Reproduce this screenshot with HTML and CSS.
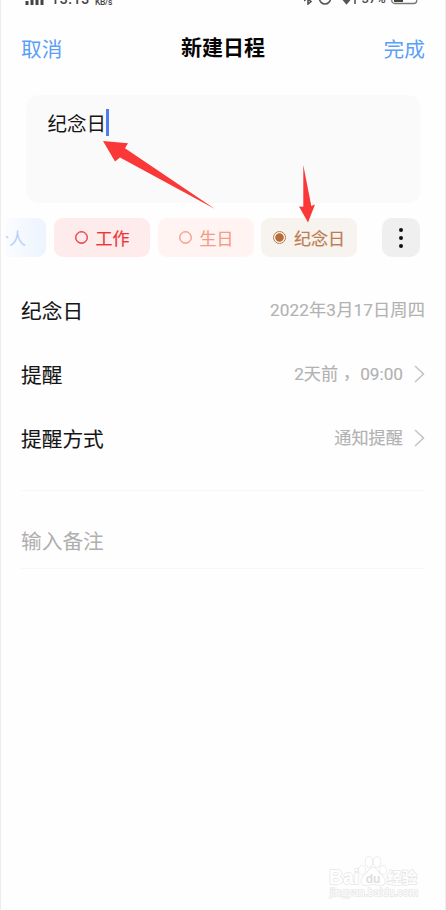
FILE: index.html
```html
<!DOCTYPE html>
<html lang="zh-CN">
<head>
<meta charset="utf-8">
<title>新建日程</title>
<link rel="stylesheet" href="styles.css">
</head>
<body>
<main class="screen">
  <div class="status">
    <div class="status-left">
      <svg class="signal" width="20" height="12" viewBox="0 0 20 12"><path d="M2 8v4M7 5v7M12 2v10M17 0v12" stroke="#444" stroke-width="3"/></svg>
      <span>13:13</span><span class="rate">KB/s</span>
    </div>
    <div class="status-right">
      <svg width="58" height="14" viewBox="0 0 58 14" fill="none" stroke="#555" stroke-width="1.6"><path d="M0 5l7 5.500L4 13V1l3 2.500L0 10"/><circle cx="21" cy="7.500" r="5.500"/><path d="M37 8q6-5 11 0"/><path d="M40 9.500l2.500 3 2.500-3z" fill="#555"/><path d="M51 4v9"/></svg>
      <span class="percent">37%</span>
      <svg class="battery" width="29" height="14" viewBox="0 0 29 14"><rect x=".75" y="1" width="25" height="11.5" rx="3" fill="none" stroke="#777" stroke-width="1.3"/><path d="M3 3h9v8H3z" fill="#444"/><path d="M28 5v4" stroke="#666"/></svg>
    </div>
  </div>
  <header class="header">
    <span class="action">取消</span>
    <h1>新建日程</h1>
    <span class="action">完成</span>
  </header>
  <section class="title-input"><span>纪念日</span><i class="caret"></i></section>
  <section class="categories">
    <div class="chips">
      <div class="chip personal">个人</div>
      <div class="chip work"><i class="ring"></i>工作</div>
      <div class="chip birthday"><i class="ring"></i>生日</div>
      <div class="chip anniversary"><i class="ring checked"></i>纪念日</div>
    </div>
    <div class="more"><i></i><i></i><i></i></div>
  </section>
  <section class="rows">
    <div class="row"><span>纪念日</span><span class="value date">2022年3月17日周四</span></div>
    <div class="row"><span>提醒</span><span class="value">2天前<span class="comma" lang="zh-TW">，</span>09:00<svg class="chevron" width="11" height="18" viewBox="0 0 11 18"><path d="M1 1l8.500 8L1 17"/></svg></span></div>
    <div class="row"><span>提醒方式</span><span class="value">通知提醒<svg class="chevron" width="11" height="18" viewBox="0 0 11 18"><path d="M1 1l8.500 8L1 17"/></svg></span></div>
  </section>
  <section class="note">输入备注</section>

  <svg class="arrows" width="446" height="240" viewBox="0 0 446 240"><path d="M103 141l25 2.300-3 5L215 209l-95-51.500-5 4z"/><path d="M303.300 165l8 41 3.700-1.500-7 18-9-16 4.300.3z"/></svg>
  <div class="watermark">
    <svg width="92" height="44" viewBox="0 0 92 44">
      <g class="outlined">
        <text class="bai" x="1" y="29" textLength="30" lengthAdjust="spacingAndGlyphs">Bai</text>
        <ellipse cx="34" cy="15" rx="3" ry="4"/><ellipse cx="41" cy="7" rx="3.500" ry="5"/><ellipse cx="49" cy="7" rx="3.500" ry="5"/><ellipse cx="55" cy="15" rx="3" ry="4"/>
        <path d="M45 13c-4 0-5 5-9 8-5 5-2 10 3 9 4-1 8-1 12 0 6 1 8-4 3-9-4-3-5-8-9-8z"/>
        <text class="cn" x="59" y="28">经验</text>
        <text class="domain" x="2" y="41" textLength="88" lengthAdjust="spacingAndGlyphs">jingyan.baidu.com</text>
      </g>
      <text class="du" x="45" y="28" text-anchor="middle">du</text>
    </svg>
  </div>
</main>
</body>
</html>
```
FILE: styles.css
```css
* { box-sizing: border-box; }
body { margin: 0; font-family: Roboto, "Noto Sans CJK SC", sans-serif; color: #151515; }
.screen { position: relative; width: 446px; height: 910px; overflow: hidden; background: #fefefe; border-left: 1px solid #ededed; border-right: 1px solid #ededed; }
.status { height: 16px; margin-top: -9px; padding: 0 26px 0 24px; display: flex; justify-content: space-between; font-size: 14px; line-height: 16px; color: #444; font-weight: 500; }
.status-left, .status-right { display: flex; align-items: flex-start; }
.signal { margin: 2px 6px 0 0; }
.status-left { letter-spacing: .7px; }
.rate { margin: 3px 0 0 5px; font-size: 8.500px; letter-spacing: -.4px; }
.status-right { margin-right: -1px; }
.status-right svg { flex: none; }
.percent { font-size: 12.500px; letter-spacing: .3px; margin: 0 5px 0 0; }
.header { height: 80px; padding: 0 20px; display: flex; align-items: center; justify-content: space-between; font-size: 20.7px; }
.action { color: #5c9ff8; padding-top: 1px; }
h1 { margin: -2px 0 0; font-size: 21px; font-weight: 700; color: #060606; }
.title-input { width: 395px; height: 108px; margin: 8px 0 0 24.500px; padding: 14px 22px; border-radius: 13px; background: #fafafa; display: flex; align-items: flex-start; font-size: 19.5px; line-height: 31px; }
.caret { width: 3px; height: 27px; margin-left: -.5px; background: #527cf0; }
.categories { height: 39px; margin: 15px 25px 0 5px; display: flex; justify-content: space-between; }
.chips { display: flex; gap: 8px; }
.chip { width: 96px; height: 39px; border-radius: 9px; display: flex; align-items: center; justify-content: center; gap: 8px; font-size: 17px; white-space: nowrap; }
.personal { width: 40px; padding-right: 20px; justify-content: flex-end; overflow: hidden; border-radius: 0 9px 9px 0; color: #b6cef9; background: linear-gradient(90deg, #fafcff, #edf4fe); }
.work { color: #ec343b; background: #feecec; -webkit-text-stroke: .2px; }
.birthday { color: #f69b89; background: #fff4f2; }
.anniversary { color: #bd7c51; background: #f7f3ee; margin-left: -1px; }
.birthday, .anniversary { -webkit-text-stroke: .2px; }
.ring { width: 13px; height: 13px; border: 1.500px solid currentColor; border-radius: 50%; flex: none; box-shadow: inset 0 0 0 .4px currentColor; }
.checked { border-width: 1px; box-shadow: none; background: radial-gradient(circle, #b66c39 0 3.800px, transparent 4.600px); }
.more { width: 38px; border-radius: 10px; background: #efefef; display: flex; flex-direction: column; gap: 4px; align-items: center; justify-content: center; }
.more i { width: 4px; height: 4px; border-radius: 50%; background: #111; }
.rows { height: 234px; margin: 0 20px; padding-top: 21px; border-bottom: 1px solid #f7f7f7; }
.row { height: 64px; display: flex; align-items: center; justify-content: space-between; font-size: 20.700px; line-height: 30px; }
.row > span:first-child { margin-top: 3px; -webkit-text-stroke: .1px; }
.value { display: flex; align-items: center; color: #b2b2b2; font-size: 17.200px; -webkit-text-stroke: .15px; }
.date { letter-spacing: .13px; }
.comma { width: 22px; text-align: center; font-family: "Noto Sans CJK TC", sans-serif; position: relative; left: -2px; top: 3px; }
.chevron { margin: -1px 0 0 11px; fill: none; stroke: #c3c3c3; stroke-width: 1.500; }
.note { height: 78px; margin: 0 20px; padding-top: 34px; border-bottom: 1px solid #f7f7f7; color: #afafaf; font-size: 20.700px; }
.arrows { position: absolute; left: -1px; top: 0; fill: #fb3838; pointer-events: none; }
.watermark { position: absolute; left: 327px; top: 855px; width: 92px; height: 44px; }
.outlined { fill: #fff; stroke: #e6e6e6; stroke-width: 1.500; paint-order: stroke; stroke-linejoin: round; }
.bai { font: 700 21px "Liberation Sans", sans-serif; }
.cn { font: 700 15px "Noto Sans CJK SC", sans-serif; }
.domain { font: 11px "Liberation Sans", sans-serif; }
.du { font: 700 12px "Liberation Sans", sans-serif; fill: #dedede; }
```
